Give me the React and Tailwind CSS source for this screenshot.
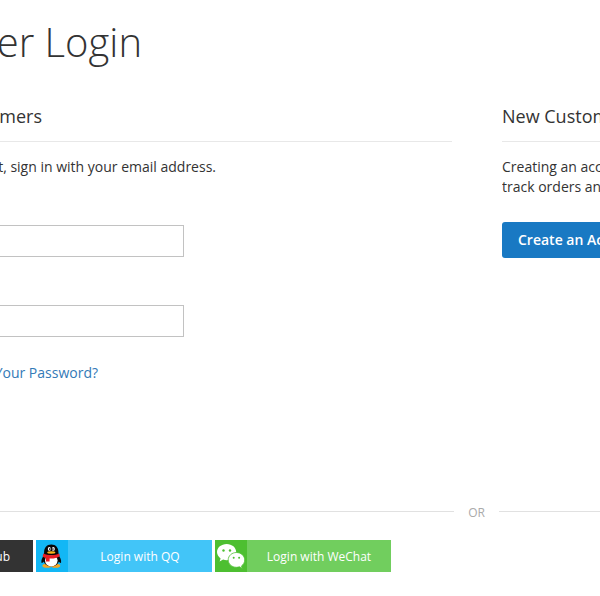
function QQIcon() {
  return (
    <svg width="32" height="32" viewBox="0 0 32 32">
      <ellipse cx="11" cy="25.800" rx="4.600" ry="2" fill="#f5a623" />
      <ellipse cx="19.600" cy="25.800" rx="4.600" ry="2" fill="#f5a623" />
      <path d="M8.500 14.500C6.500 17 5 20 5.400 22.600c.6 1 2-.6 2.800-1.600h14.200c.8 1 2.200 2.600 2.700 1.600.4-2.600-1-5.600-3-8.100z" fill="#080808" />
      <ellipse cx="15.300" cy="19.500" rx="8" ry="7" fill="#080808" />
      <ellipse cx="15.300" cy="20.600" rx="6.300" ry="5.800" fill="#fff" />
      <path d="M8.100 13C8.100 7.500 10.600 4.500 15.300 4.500s7.200 3 7.200 8.500l.4 2.500H7.700z" fill="#080808" />
      <path d="M7.400 13.600c4.500 2.300 11.300 2.300 15.800 0l.7 2.700c-3.300 1.900-7 2.500-10.300 2.200v3h-3.600v-3.500c-1.400-.3-2.200-.8-3.400-1.600z" fill="#e81c24" />
      <ellipse cx="13.300" cy="8.900" rx="1.500" ry="1.900" fill="#fff" />
      <ellipse cx="17.300" cy="8.900" rx="1.500" ry="1.900" fill="#fff" />
      <circle cx="13.700" cy="9.100" r=".8" fill="#000" />
      <circle cx="16.900" cy="9.100" r=".8" fill="#000" />
      <ellipse cx="15.300" cy="12.500" rx="4.100" ry="1.200" fill="#fbb41a" />
    </svg>
  );
}

function WeChatIcon() {
  return (
    <svg width="32" height="32" viewBox="0 0 32 32">
      <path d="M11.700 4C6.200 4 2 7.600 2 12.100c0 2.600 1.400 4.800 3.600 6.300l-1 3 3.500-1.800c1.200.3 2.400.6 3.700.6 5.200 0 9.400-3.600 9.400-8.100S17 4 11.700 4z" fill="#fff" />
      <path d="M21.400 12.500c-4.500 0-8.200 3.300-8.200 7.400s3.700 7.400 8.200 7.400c1.100 0 2.100-.2 3.100-.5l2.800 1.600-.8-2.500c2-1.400 3.200-3.500 3.200-6 0-4.100-3.700-7.400-8.300-7.400z" fill="#fff" stroke="#4dbf31" strokeWidth=".8" />
      <circle cx="8.500" cy="10.500" r="1.200" fill="#4dbf31" />
      <circle cx="15" cy="10.500" r="1.200" fill="#4dbf31" />
      <circle cx="18.700" cy="17.800" r="1" fill="#4dbf31" />
      <circle cx="24.100" cy="17.800" r="1" fill="#4dbf31" />
    </svg>
  );
}

export default function App() {
  return (
    <div className="flex h-[596px] w-[600px] flex-col overflow-hidden bg-white font-['Open_Sans','Noto_Sans',sans-serif] text-sm leading-5 text-[#333]">
      <h1 className="mt-5 flex h-11 w-[142px] justify-end whitespace-nowrap text-[40px] font-light leading-[44px]">er Login</h1>
      <main className="mt-[42px] flex h-[405px] shrink-0 gap-[50px]">
        <section className="w-[452px] shrink-0">
          <div className="h-9 border-b border-[#e8e8e8]">
            <h2 className="flex w-[42px] justify-end whitespace-nowrap text-lg leading-5">mers</h2>
          </div>
          <p className="mt-[15px] flex w-[216px] justify-end whitespace-nowrap">t, sign in with your email address.</p>
          <input aria-label="Email" className="mt-12 -ml-px block h-8 w-[185px] border border-[#c2c2c2] bg-white" />
          <input aria-label="Password" type="password" className="mt-12 -ml-px block h-8 w-[185px] border border-[#c2c2c2] bg-white" />
          <a className="mt-[26px] flex w-[98px] justify-end whitespace-nowrap text-[#337ab7]">Your Password?</a>
        </section>
        <section className="w-[98px] shrink-0 overflow-hidden whitespace-nowrap">
          <div className="h-9 border-b border-[#e8e8e8]">
            <h2 className="text-lg leading-5">New Custom</h2>
          </div>
          <p className="mt-[15px]">Creating an acc<br />track orders an</p>
          <button className="mt-[25px] flex h-9 w-[140px] items-center rounded-[3px] bg-[#1979c3] pl-4 font-semibold text-white">Create an Ac</button>
        </section>
      </main>
      <div className="flex h-[1px] shrink-0 items-center text-xs text-[#aaa]">
        <div className="h-px w-[454px] bg-[#e1e1e1]" />
        <span className="w-[45px] pt-[2px] text-center">OR</span>
        <div className="h-px flex-1 bg-[#e1e1e1]" />
      </div>
      <div className="mt-7 flex h-8 shrink-0 gap-[3px] text-xs leading-[34px] text-white">
        <div className="flex w-[33px] justify-end bg-[#333] pr-[23px] whitespace-nowrap">ub</div>
        <div className="flex w-44 bg-[#42c5f8]">
          <div className="w-8 bg-[#12b7f5]"><QQIcon /></div>
          <span className="flex-1 text-center">Login with QQ</span>
        </div>
        <div className="flex w-44 bg-[#71ce5e]">
          <div className="w-8 bg-[#4dbf31]"><WeChatIcon /></div>
          <span className="flex-1 text-center">Login with WeChat</span>
        </div>
      </div>
    </div>
  );
}
